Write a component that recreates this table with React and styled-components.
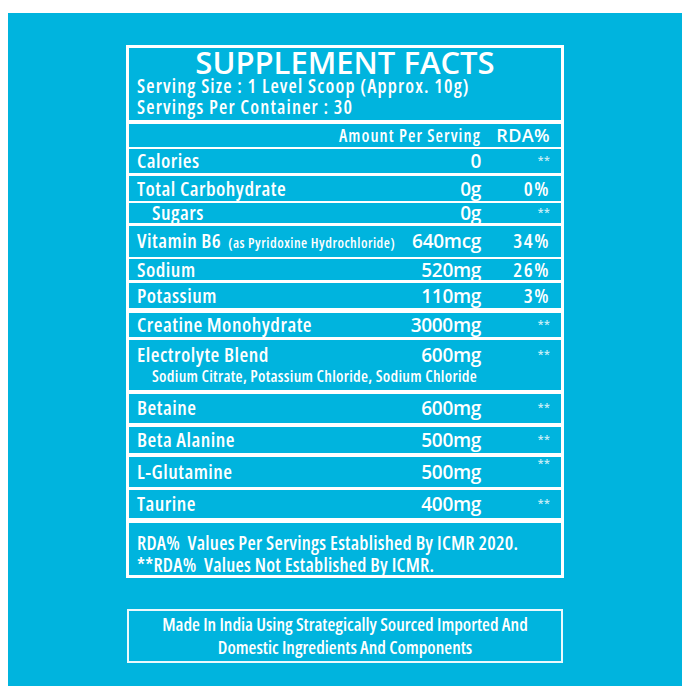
import React from "react";
import styled, { createGlobalStyle } from "styled-components";

const CYAN = "#00b4de";

const Global = createGlobalStyle`
  html, body { margin: 0; padding: 0; background: #ffffff; }
  body { font-family: "Open Sans", "Noto Sans", sans-serif; color: #ffffff; }
  * { box-sizing: border-box; }
`;

const Page = styled.div`
  width: 690px;
  height: 700px;
  padding: 13px 8px 14px;
`;

const Backdrop = styled.div`
  height: 673px;
  background: ${CYAN};
  display: flex;
  flex-direction: column;
  align-items: center;
  padding-top: 32px;
  gap: 31px;
`;

const Panel = styled.section`
  width: 438px;
  border: 3px solid #ffffff;
  background: #ffffff;
  display: flex;
  flex-direction: column;
`;

const Header = styled.header`
  background: ${CYAN};
  height: 72px;
  padding: 0 8px 2px;
  display: flex;
  flex-direction: column;
`;

const Title = styled.h1`
  margin: 0;
  font-size: 31px;
  line-height: 28px;
  font-weight: 600;
  font-stretch: 100%;
  letter-spacing: 0;
  text-align: center;
`;

const ServingLine = styled.div`
  font-size: 19px;
  line-height: 21px;
  font-weight: 600;
  font-stretch: 75%;
  letter-spacing: 1.15px;
  white-space: nowrap;
`;

const Row = styled.div`
  margin-top: ${(p) => p.$sep}px;
  height: ${(p) => p.$h}px;
  background: ${CYAN};
  display: grid;
  grid-template-columns: 1fr auto 69px;
  align-items: baseline;
  align-content: center;
  padding: ${(p) => (p.$tall ? "3px 11px 3px 8px" : "0 11px 0 8px")};
  white-space: nowrap;
`;

const ColHead = styled.span`
  font-size: ${(p) => (p.$wide ? 18 : 17)}px;
  line-height: 20px;
  font-weight: 600;
  font-stretch: ${(p) => (p.$wide ? "100%" : "75%")};
  letter-spacing: ${(p) => (p.$wide ? 0.4 : 1.1)}px;
  text-align: right;
  grid-column: ${(p) => p.$col};
`;

const Label = styled.span`
  font-size: 20px;
  line-height: 20px;
  font-weight: 600;
  font-stretch: 75%;
  letter-spacing: 0.5px;
  padding-left: ${(p) => (p.$indent ? 15 : 0)}px;
`;

const Note = styled.span`
  font-size: 14px;
  font-weight: 600;
  font-stretch: 75%;
  letter-spacing: 0.5px;
  margin-left: 7px;
`;

const Amount = styled.span`
  font-size: 19px;
  line-height: 20px;
  font-weight: 600;
  font-stretch: 100%;
  letter-spacing: -0.3px;
  text-align: right;
`;

const Rda = styled.span`
  font-size: ${(p) => (p.$stars ? 16 : 20)}px;
  line-height: 20px;
  font-weight: ${(p) => (p.$stars ? 400 : 600)};
  font-stretch: 75%;
  letter-spacing: ${(p) => (p.$stars ? 0 : 1.5)}px;
  color: ${(p) => (p.$stars ? "rgba(255,255,255,0.8)" : "#ffffff")};
  text-align: right;
  transform: translateY(${(p) => (p.$raise ? -8 : 0)}px);
`;

const SubLine = styled.span`
  grid-column: 1 / -1;
  font-size: 16px;
  line-height: 20px;
  font-weight: 600;
  font-stretch: 75%;
  letter-spacing: 0.3px;
  padding-left: 15px;
`;

const Footnote = styled.div`
  margin-top: 5px;
  height: 52px;
  background: ${CYAN};
  padding: 9px 8px 0;
  font-size: 19px;
  line-height: 22px;
  font-weight: 600;
  font-stretch: 75%;
  letter-spacing: 0.25px;
  white-space: pre;
`;

const OriginBox = styled.div`
  width: 436px;
  height: 54px;
  border: 2px solid rgba(255, 255, 255, 0.92);
  padding: 2px 6px;
  text-align: center;
  font-size: 18px;
  line-height: 23px;
  font-weight: 600;
  font-stretch: 75%;
`;

const rows = [
  { label: "Calories", amt: "0", rda: "**", h: 24, sep: 2 },
  { label: "Total Carbohydrate", amt: "0g", rda: "0%", h: 25, sep: 3 },
  { label: "Sugars", indent: true, amt: "0g", rda: "**", h: 20, sep: 2 },
  { label: "Vitamin B6", note: "(as Pyridoxine Hydrochloride)", amt: "640mcg", rda: "34%", h: 31, sep: 3 },
  { label: "Sodium", amt: "520mg", rda: "26%", h: 21, sep: 2 },
  { label: "Potassium", amt: "110mg", rda: "3%", h: 25, sep: 3 },
  { label: "Creatine Monohydrate", amt: "3000mg", rda: "**", h: 24, sep: 5 },
  {
    label: "Electrolyte Blend",
    amt: "600mg",
    rda: "**",
    sub: "Sodium Citrate, Potassium Chloride, Sodium Chloride",
    h: 50,
    sep: 3,
  },
  { label: "Betaine", amt: "600mg", rda: "**", h: 29, sep: 4 },
  { label: "Beta Alanine", amt: "500mg", rda: "**", h: 26, sep: 4 },
  { label: "L-Glutamine", amt: "500mg", rda: "**", h: 30, sep: 4, raise: true },
  { label: "Taurine", amt: "400mg", rda: "**", h: 28, sep: 3 },
];

export default function App() {
  return (
    <Page>
      <Global />
      <Backdrop>
        <Panel>
          <Header>
            <Title>SUPPLEMENT FACTS</Title>
            <ServingLine>Serving Size : 1 Level Scoop (Approx. 10g)</ServingLine>
            <ServingLine>Servings Per Container : 30</ServingLine>
          </Header>
          <Row $sep={4} $h={23}>
            <ColHead $col={2}>Amount Per Serving</ColHead>
            <ColHead $col={3} $wide>RDA%</ColHead>
          </Row>
          {rows.map((r) => (
            <Row key={r.label} $sep={r.sep} $h={r.h} $tall={!!r.sub}>
              <Label $indent={r.indent}>
                {r.label}
                {r.note && <Note>{r.note}</Note>}
              </Label>
              <Amount>{r.amt}</Amount>
              <Rda $stars={r.rda === "**"} $raise={r.raise}>
                {r.rda}
              </Rda>
              {r.sub && <SubLine>{r.sub}</SubLine>}
            </Row>
          ))}
          <Footnote>
            {"RDA%  Values Per Servings Established By ICMR 2020.\n**RDA%  Values Not Established By ICMR."}
          </Footnote>
        </Panel>
        <OriginBox>
          Made In India Using Strategically Sourced Imported And
          <br />
          Domestic Ingredients And Components
        </OriginBox>
      </Backdrop>
    </Page>
  );
}
